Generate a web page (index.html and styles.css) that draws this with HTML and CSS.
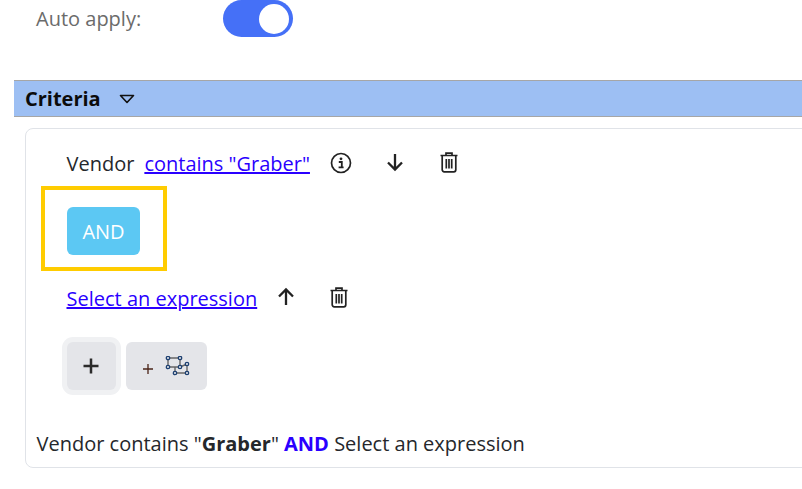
FILE: index.html
```html
<!DOCTYPE html>
<html>
<head>
    <meta charset="utf-8">
    <link rel="stylesheet" href="styles.css">
</head>
<body>
    <div class="auto-apply">
        <span class="auto-label">Auto apply:</span>
        <span class="toggle"><span class="knob"></span></span>
    </div>

    <div class="section-bar">
        <strong>Criteria</strong>
        <svg class="caret" width="16" height="10" viewBox="0 0 16 10"><path d="M1.5 1.5h13L8 8.500z" fill="none" stroke="#111" stroke-width="1.6" stroke-linejoin="round"/></svg>
    </div>

    <div class="card">
        <div class="row row-first">
            <span>Vendor</span>
            <a class="link" href="#">contains "Graber"</a>
            <svg class="icon icon-info" width="22" height="22" viewBox="0 0 22 22"><circle cx="11" cy="11" r="9.500" fill="none" stroke="#222" stroke-width="1.700"/><circle cx="11" cy="6.800" r="1.400" fill="#222"/><path d="M8.800 10h3v5.200M8.600 15.400h5" fill="none" stroke="#222" stroke-width="1.800"/></svg>
            <svg class="icon icon-arrow" width="20" height="20" viewBox="0 0 20 20"><path d="M10 2v16M3 10.500l7 7 7-7" fill="none" stroke="#222" stroke-width="2.300"/></svg>
            <svg class="icon icon-trash" width="20" height="22" viewBox="0 0 20 22"><path d="M1.500 4.500h17M7 4.500V2.200h6v2.300M3.200 5v13.800a2 2 0 0 0 2 2h9.600a2 2 0 0 0 2-2V5M7.300 8v9.500M10 8v9.500M12.700 8v9.500" fill="none" stroke="#222" stroke-width="1.700"/></svg>
        </div>

        <button class="and-btn">AND</button>

        <div class="row row-second">
            <a class="link" href="#">Select an expression</a>
            <svg class="icon icon-arrow-up" width="20" height="20" viewBox="0 0 20 20"><path d="M10 18V2M3 9.500l7-7 7 7" fill="none" stroke="#222" stroke-width="2.300"/></svg>
            <svg class="icon icon-trash" width="20" height="22" viewBox="0 0 20 22"><path d="M1.500 4.500h17M7 4.500V2.200h6v2.300M3.200 5v13.800a2 2 0 0 0 2 2h9.600a2 2 0 0 0 2-2V5M7.300 8v9.500M10 8v9.500M12.700 8v9.500" fill="none" stroke="#222" stroke-width="1.700"/></svg>
        </div>

        <div class="actions">
            <button class="add-btn">
                <svg width="18" height="18" viewBox="0 0 18 18"><path d="M9 1.500v15M1.500 9h15" stroke="#2b2b2b" stroke-width="2.500"/></svg>
            </button>
            <button class="group-btn">
                <svg class="group-plus" width="12" height="12" viewBox="0 0 12 12"><path d="M6 1v10M1 6h10" stroke="#4a2418" stroke-width="1.300"/></svg>
                <svg class="group-icon" width="26" height="20" viewBox="0 0 26 20">
                    <path d="M3 2h12M3 2v9M3 11h12M15 2v9M10 11v6M10 17h12M22 8v9M15 11l7-3" fill="none" stroke="#666" stroke-width="1.400"/>
                    <g fill="#e4e5e9" stroke="#1c3f70" stroke-width="1.300">
                        <circle cx="3" cy="2" r="1.700"/><circle cx="15" cy="2" r="1.700"/><circle cx="3" cy="11" r="1.700"/><circle cx="15" cy="11" r="1.700"/>
                        <circle cx="10" cy="17" r="1.700"/><circle cx="22" cy="17" r="1.700"/><circle cx="22" cy="8" r="1.700"/>
                    </g>
                </svg>
            </button>
        </div>

        <div class="summary">Vendor contains "<b>Graber</b>" <b class="op">AND</b> Select an expression</div>
    </div>

    <div class="highlight"></div>
</body>
</html>
```

FILE: styles.css
```css
html, body {
    height: 100%;
}

body {
    margin: 0;
    background: #fff;
    color: #25272b;
    font-family: "Open Sans", sans-serif;
    font-size: 20px;
    overflow: hidden;
    position: relative;
}

.auto-apply {
    display: flex;
    align-items: center;
    height: 37px;
    padding-left: 36px;
}

.auto-label {
    width: 187px;
    color: #6b6b6b;
}

.toggle {
    display: flex;
    justify-content: flex-end;
    align-items: center;
    width: 70px;
    height: 37px;
    box-sizing: border-box;
    padding-right: 4px;
    border-radius: 19px;
    background: #4570f7;
}

.knob {
    width: 30px;
    height: 30px;
    border-radius: 50%;
    background: #fff;
}

.section-bar {
    display: flex;
    align-items: center;
    height: 37px;
    box-sizing: border-box;
    margin: 43px 0 0 14px;
    padding-left: 11px;
    background: #9dbff3;
    border-top: 1px solid #a6a6a6;
    border-bottom: 1px solid #a6a6a6;
    color: #0b0b0b;
}

.section-bar strong {
    font-weight: 700;
}

.caret {
    margin-left: 18px;
}

.card {
    width: 800px;
    height: 340px;
    box-sizing: border-box;
    margin: 11px 0 0 25px;
    border: 1px solid #e0e3e8;
    border-radius: 8px;
    position: relative;
}

.row {
    display: flex;
    align-items: center;
    height: 30px;
    padding-left: 40.5px;
}

.row-first {
    margin-top: 19px;
}

.row-second {
    margin-top: 28px;
}

.link {
    color: #2a00ff;
}

.row-first .link {
    margin-left: 10px;
}

.icon {
    margin-bottom: 2px;
}

.icon-info {
    margin-left: 20px;
    margin-bottom: 0;
}

.icon-arrow {
    margin-left: 33px;
}

.row-first .icon-trash {
    margin-left: 34px;
}

.icon-arrow-up {
    margin-left: 19px;
}

.row-second .icon-trash {
    margin-left: 33px;
}

.and-btn {
    display: block;
    width: 73px;
    height: 48px;
    margin: 29px 0 0 41px;
    border: none;
    border-radius: 6px;
    background: #5cc8f3;
    color: #fff;
    font-family: inherit;
    font-size: 20px;
}

.actions {
    display: flex;
    align-items: center;
    gap: 10px;
    margin: 29px 0 0 41px;
}

.actions button {
    display: flex;
    align-items: center;
    height: 48px;
    padding: 0;
    border: none;
    border-radius: 6px;
    background: #e4e5e9;
}

.actions .add-btn {
    width: 49px;
    justify-content: center;
    padding-right: 1px;
    box-shadow: 0 0 0 5px #f0f1f3;
}

.actions .group-btn {
    width: 81px;
    gap: 11px;
    padding-left: 16px;
}

.group-plus {
    margin-top: 6px;
}

.group-icon {
    margin-bottom: 1px;
}

.summary {
    margin: 40px 0 0 10.5px;
    line-height: 27px;
}

.summary .op {
    color: #2a00ff;
}

/* callout drawn over the AND button */
.highlight {
    position: absolute;
    left: 41px;
    top: 186px;
    width: 118px;
    height: 77px;
    border: 4px solid #ffcc00;
}
```
